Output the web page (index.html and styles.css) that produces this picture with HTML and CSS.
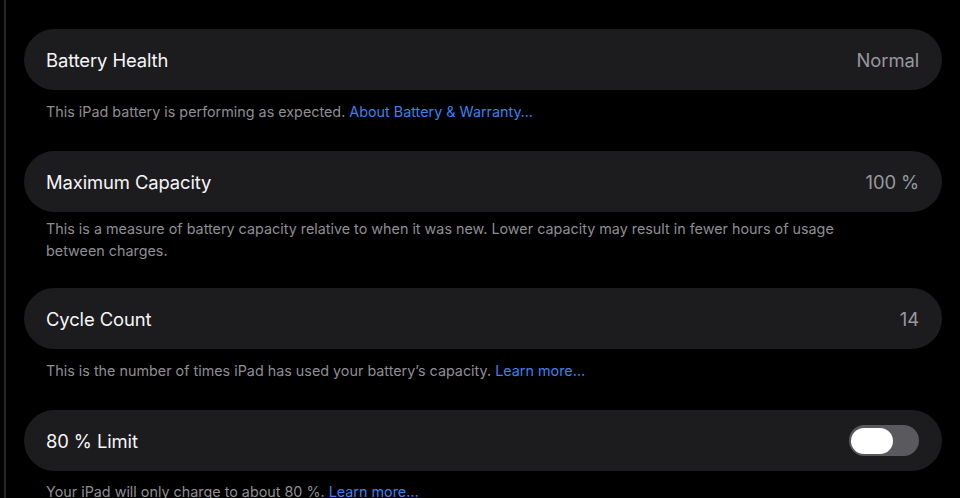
FILE: index.html
```html
<!DOCTYPE html>
<html lang="en">
<head>
<meta charset="utf-8">
<title>Battery Health</title>
<link rel="stylesheet" href="styles.css">
</head>
<body>
<div class="screen">
  <div class="divider"></div>
  <main class="content">
    <section class="group">
      <div class="cell">
        <span class="label">Battery Health</span>
        <span class="value">Normal</span>
      </div>
      <p class="footer">This iPad battery is performing as expected. <a class="link">About Battery &amp; Warranty…</a></p>
    </section>
    <section class="group">
      <div class="cell">
        <span class="label">Maximum Capacity</span>
        <span class="value">100 %</span>
      </div>
      <p class="footer narrow">This is a measure of battery capacity relative to when it was new. Lower capacity may result in fewer hours of usage between charges.</p>
    </section>
    <section class="group">
      <div class="cell">
        <span class="label">Cycle Count</span>
        <span class="value">14</span>
      </div>
      <p class="footer">This is the number of times iPad has used your battery’s capacity. <a class="link">Learn more…</a></p>
    </section>
    <section class="group">
      <div class="cell">
        <span class="label">80 % Limit</span>
        <span class="toggle"><span class="knob"></span></span>
      </div>
      <p class="footer last">Your iPad will only charge to about 80 %. <a class="link">Learn more…</a></p>
    </section>
  </main>
</div>
</body>
</html>
```
FILE: styles.css
```css
html, body {
  margin: 0;
  padding: 0;
  background: #000;
  height: 100%;
  overflow: hidden;
}
body {
  font-family: Inter, "Noto Sans", "Liberation Sans", sans-serif;
  color: #fff;
}
.screen {
  display: flex;
  height: 498px;
}
.divider {
  width: 2px;
  margin-left: 4px;
  background: #262628;
  flex: none;
}
.content {
  flex: 1;
  padding: 29px 18px 0 18px;
  display: flex;
  flex-direction: column;
}
.group {
  display: flex;
  flex-direction: column;
}
.cell {
  height: 61px;
  flex: none;
  box-sizing: border-box;
  background: #1c1c1e;
  border-radius: 31px;
  padding: 0 23px 0 22px;
  display: flex;
  align-items: center;
  justify-content: space-between;
}
.label {
  font-size: 18.4px;
  letter-spacing: -0.1px;
  color: #f5f5f7;
}
.value {
  font-size: 18.4px;
  letter-spacing: -0.1px;
  color: #98989e;
}
.footer {
  margin: 0 0 29px 0;
  padding: 11px 22px 0 22px;
  font-size: 14.35px;
  line-height: 21px;
  color: #8e8e93;
}
.footer.narrow {
  max-width: 800px;
  padding-top: 6px;
  margin-bottom: 26px;
  line-height: 22px;
}
.footer.last {
  padding-top: 10px;
}
.link {
  color: #3b82f0;
  text-decoration: none;
}
.toggle {
  width: 70px;
  height: 31px;
  border-radius: 16px;
  background: #5a5a5e;
  display: flex;
  align-items: center;
  padding: 0 2px;
  box-sizing: border-box;
}
.knob {
  width: 42px;
  height: 26px;
  border-radius: 13px;
  background: #fff;
}
```
